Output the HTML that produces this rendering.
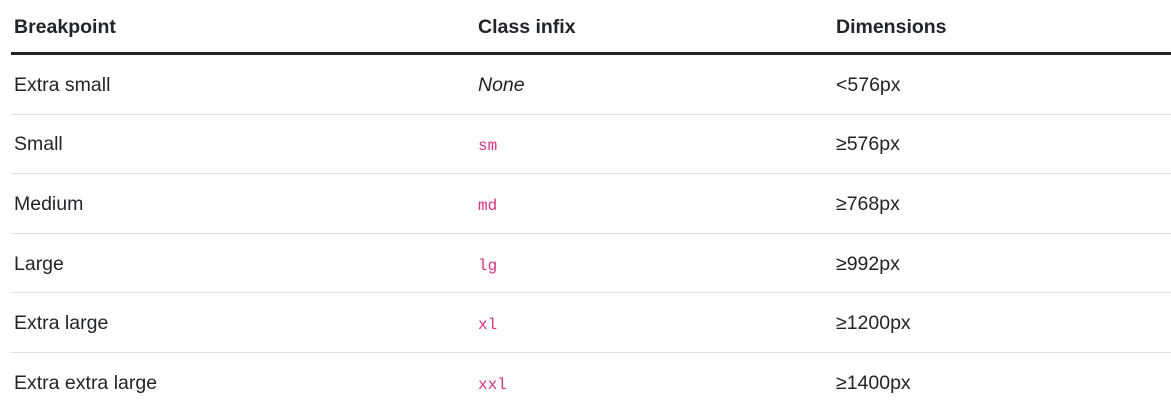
<!DOCTYPE html>
<html><head><style>
body{margin:0;background:#fff;font-family:"Liberation Sans",sans-serif;color:#212529;font-size:19.5px}
table{position:absolute;left:11px;top:0;width:1160px;border-collapse:collapse;table-layout:fixed}
th,td{text-align:left;padding:2px 0 0 3px;vertical-align:middle}
th{height:50px;font-weight:bold;border-bottom:3px solid #212529}
td{height:56.6px;border-bottom:1px solid #dee2e6}
tr:last-child td{border-bottom:none}
code{font-family:"Liberation Mono",monospace;color:#d63384;font-size:16px}
.c1{width:461px}.c2{width:355px}
</style></head><body>
<table>
<tr><th class="c1">Breakpoint</th><th class="c2">Class infix</th><th>Dimensions</th></tr>
<tr><td>Extra small</td><td><i>None</i></td><td>&lt;576px</td></tr>
<tr><td>Small</td><td><code>sm</code></td><td>≥576px</td></tr>
<tr><td>Medium</td><td><code>md</code></td><td>≥768px</td></tr>
<tr><td>Large</td><td><code>lg</code></td><td>≥992px</td></tr>
<tr><td>Extra large</td><td><code>xl</code></td><td>≥1200px</td></tr>
<tr><td>Extra extra large</td><td><code>xxl</code></td><td>≥1400px</td></tr>
</table>
</body></html>
